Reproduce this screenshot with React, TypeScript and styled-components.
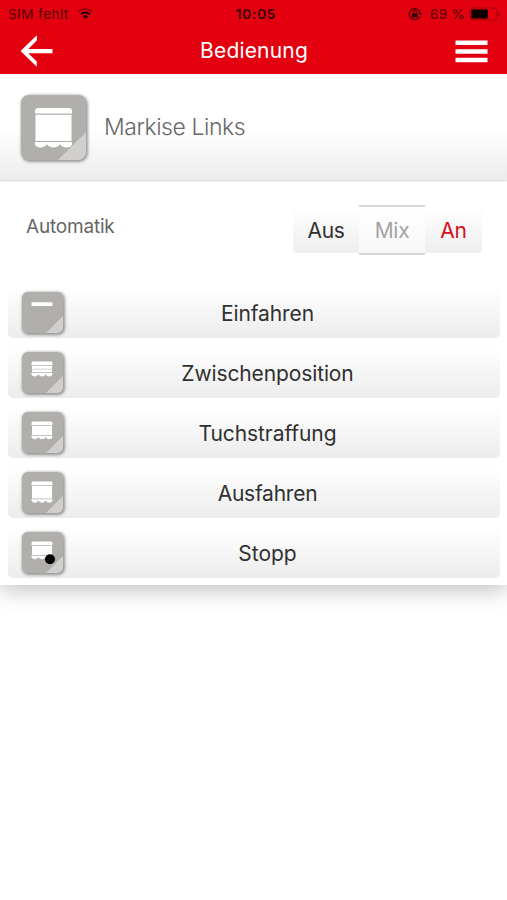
import React from 'react';
import styled, { createGlobalStyle } from 'styled-components';

const GlobalStyle = createGlobalStyle`
  * { box-sizing: border-box; }
  body { margin: 0; background: #fff; font-family: Inter, 'Liberation Sans', sans-serif; overflow: hidden; }
  button { font-family: inherit; border: 0; padding: 0; background: none; }
  svg { display: block; flex: none; }
`;

const Screen = styled.main`
  width: 507px;
  height: 900px;
  background: #fff;
  overflow: hidden;
`;

const Header = styled.header`
  position: relative;
  z-index: 1;
  height: 74px;
  background: #e3000f;
`;

const StatusBar = styled.div`
  height: 27px;
  padding: 1px 7px 0 8px;
  display: grid;
  grid-template-columns: 1fr auto 1fr;
  align-items: center;
  color: #4e0308;
  font-size: 13px;
  line-height: 26px;
`;

const StatusGroup = styled.div<{ $end?: boolean }>`
  display: flex;
  align-items: center;
  justify-content: ${(p) => (p.$end ? 'flex-end' : 'flex-start')};
`;

const Carrier = styled.span`
  width: 70px;
  font-size: 13.5px;
  letter-spacing: 0.45px;
`;

const Clock = styled.span`
  color: #300205;
  font-size: 13.5px;
  font-weight: 600;
  letter-spacing: 0.8px;
  margin-left: 4px;
`;

const Battery = styled.span`
  margin: 0 4px 0 7px;
  font-size: 13.5px;
  letter-spacing: 0.3px;
  white-space: nowrap;
`;

const NavBar = styled.nav`
  height: 47px;
  padding: 0 19px 0 20px;
  display: grid;
  grid-template-columns: 33px 1fr 33px;
  align-items: center;
`;

const NavTitle = styled.h1`
  margin: 0;
  color: #fff;
  text-align: center;
  font-size: 21px;
  font-weight: 400;
  line-height: 46px;
  letter-spacing: 0.18px;
`;

const Panel = styled.section`
  height: 511px;
  background: #fff;
  box-shadow: 0 4px 22px rgba(0, 0, 0, 0.27);
`;

const DeviceHeader = styled.div`
  height: 106px;
  padding: 21px 0 0 21px;
  display: flex;
  background: linear-gradient(#fff 52%, #ececec);
  box-shadow: 0 1px 2px rgba(0, 0, 0, 0.18);
`;

const DeviceName = styled.h2`
  margin: 0 0 0 18px;
  color: #686868;
  font-size: 23px;
  font-weight: 300;
  line-height: 64px;
  letter-spacing: -0.45px;
`;

const Tile = styled.div<{ $large?: boolean }>`
  flex: none;
  width: ${(p) => (p.$large ? 65 : 41)}px;
  height: ${(p) => (p.$large ? 65 : 41)}px;
  border-radius: ${(p) => (p.$large ? 8 : 6)}px;
  background: #b1afac;
  box-shadow: 1px 1px 3px 1px rgba(0, 0, 0, 0.38);
  overflow: hidden;
`;

const AutomaticRow = styled.div`
  height: 108px;
  padding: 25px 25px 0 26px;
  display: flex;
  justify-content: space-between;
`;

const AutomaticLabel = styled.span`
  color: #666;
  font-size: 19px;
  line-height: 43px;
  letter-spacing: -0.2px;
`;

const Segments = styled.div`
  width: 189px;
  height: 50px;
  display: flex;
`;

const Segment = styled.button<{ $tone: 'dark' | 'red' | 'muted' }>`
  width: ${(p) => ({ dark: 66, muted: 66, red: 57 })[p.$tone]}px;
  height: 50px;
  font-size: 21px;
  letter-spacing: -0.3px;
  color: ${(p) => ({ dark: '#303030', muted: '#a3a3a3', red: '#d80d18' })[p.$tone]};
  border: solid ${(p) => (p.$tone === 'muted' ? '#d6d6d6' : 'transparent')};
  border-width: 2px 0;
  border-radius: ${(p) => ({ dark: '5px 0 0 5px', muted: '0', red: '0 5px 5px 0' })[p.$tone]};
  background: ${(p) => (p.$tone === 'muted' ? 'linear-gradient(#fff, #f8f8f8)' : 'linear-gradient(#fff, #eee)')} padding-box;
`;

const Commands = styled.div`
  padding: 0 7px 0 8px;
  display: flex;
  flex-direction: column;
  gap: 10px;
`;

const Command = styled.button`
  height: 50px;
  padding: 4px 14px 0;
  display: grid;
  grid-template-columns: 41px 1fr 14px;
  align-items: start;
  border-radius: 5px;
  background: linear-gradient(#fff, #ececec);
`;

const CommandLabel = styled.span<{ $tracking: number }>`
  color: #303030;
  font-size: 21px;
  line-height: 43px;
  letter-spacing: ${(p) => p.$tracking}px;
`;

type AwningState = 'closed' | 'middle' | 'tight' | 'open' | 'stop';

function AwningTile({ state, large }: { state: AwningState; large?: boolean }) {
  if (large) {
    return (
      <Tile $large>
        <svg width="65" height="65" viewBox="0 0 65 65">
          <path d="M65 37v28H37z" fill="#d0cfcd" />
          <path d="M14 18.500V16q0-3 3-3h31q3 0 3 3v2.500z" fill="#fff" />
          <path d="M14.500 19.700h36V46h-36z" fill="#fff" />
          <path d="M14 47h37v2.500q-1 3-5.500 3-4 0-6.500-3.200-2.500 3.200-6.500 3.200T26 49.300q-2.500 3.200-6.500 3.200-4.500 0-5.500-3z" fill="#fff" />
        </svg>
      </Tile>
    );
  }
  const hem = { closed: 0, middle: 20.3, tight: 23, open: 26.5, stop: 23 }[state];
  return (
    <Tile>
      <svg width="41" height="41" viewBox="0 0 41 41">
        <path d="M41 24v17H24z" fill="#d0cfcd" />
        {state === 'closed' ? (
          <rect x="9.500" y="10.300" width="21" height="3.700" rx=".8" fill="#fff" />
        ) : (
          <g fill="#fff">
            <path d="M9.500 13V11q0-1.500 1.500-1.500h18q1.500 0 1.500 1.500v2z" />
            <path d={`M10 13.700H30V${hem}H10z`} />
            <path d={`M9.500 ${hem + 0.7}H30.500V${hem + 2.2}q-1 2-3.300 2-2.200 0-3.600-2.200-1.300 2.200-3.600 2.200t-3.600-2.200q-1.300 2.200-3.600 2.200-2.300 0-3.300-2z`} />
            {state === 'middle' && <path d="M9.500 17.200h21" stroke="#c8c6c4" strokeWidth=".8" />}
          </g>
        )}
        {state === 'stop' && <circle cx="28" cy="27.300" r="5" fill="#000" />}
      </svg>
    </Tile>
  );
}

const commands: { label: string; state: AwningState; tracking: number }[] = [
  { label: 'Einfahren', state: 'closed', tracking: -0.1 },
  { label: 'Zwischenposition', state: 'middle', tracking: -0.12 },
  { label: 'Tuchstraffung', state: 'tight', tracking: -0.08 },
  { label: 'Ausfahren', state: 'open', tracking: -0.25 },
  { label: 'Stopp', state: 'stop', tracking: 0 },
];

export default function App() {
  return (
    <>
      <GlobalStyle />
      <Screen>
        <Header>
          <StatusBar>
            <StatusGroup>
              <Carrier>SIM fehlt</Carrier>
              <svg width="15" height="12" viewBox="0 0 15 12" fill="none">
                <path d="M.8 3.500Q7.500-1.500 14.200 3.500" stroke="#8b0208" strokeWidth="1.700" />
                <path d="M3 6.300q4.500-3.600 9 0" stroke="#1c0001" strokeWidth="2" />
                <path d="M4.800 8.200q2.700-2 5.400 0L7.500 11z" fill="#1c0001" />
              </svg>
            </StatusGroup>
            <Clock>10:05</Clock>
            <StatusGroup $end>
              <svg width="15" height="14" viewBox="0 0 15 14" fill="none" stroke="#4e0308">
                <path d="M11.800 9.500A5.500 5.500 0 1 1 12.200 6" strokeWidth="1.300" />
                <path d="m10 6 2.300 2.500L14.500 6z" fill="#4e0308" stroke="none" />
                <rect x="4" y="6.300" width="5.600" height="4" fill="#250002" stroke="none" />
                <path d="M5.200 6.500V5a1.600 1.600 0 0 1 3.200 0v1.500" strokeWidth="1.100" />
              </svg>
              <Battery>69 %</Battery>
              <svg width="31" height="14" viewBox="0 0 31 14">
                <rect x=".7" y="1" width="27" height="12" rx="2.500" fill="none" stroke="#a3020b" />
                <rect x="2.300" y="2.600" width="16.500" height="8.800" rx=".8" fill="#0c0000" />
                <path d="M29.300 5v4q1.500-.6 1.500-2t-1.500-2" fill="#8b0208" />
              </svg>
            </StatusGroup>
          </StatusBar>
          <NavBar>
            <svg width="33" height="34" viewBox="0 0 33 34" fill="#fff">
              <path d="M.5 17 16.800 1.200v5.300L8.300 14.900H32.500v4.300H8.300l8.500 8.300v5.300z" />
            </svg>
            <NavTitle>Bedienung</NavTitle>
            <svg width="33" height="24" viewBox="0 0 33 24" fill="#fff">
              <path d="M.5 1.500h32V6H.5zM.5 10.200h32v4.500H.5zM.5 18.700h32v4.500H.5z" />
            </svg>
          </NavBar>
        </Header>
        <Panel>
          <DeviceHeader>
            <AwningTile state="open" large />
            <DeviceName>Markise Links</DeviceName>
          </DeviceHeader>
          <AutomaticRow>
            <AutomaticLabel>Automatik</AutomaticLabel>
            <Segments>
              <Segment $tone="dark">Aus</Segment>
              <Segment $tone="muted">Mix</Segment>
              <Segment $tone="red">An</Segment>
            </Segments>
          </AutomaticRow>
          <Commands>
            {commands.map((c) => (
              <Command key={c.label}>
                <AwningTile state={c.state} />
                <CommandLabel $tracking={c.tracking}>{c.label}</CommandLabel>
              </Command>
            ))}
          </Commands>
        </Panel>
      </Screen>
    </>
  );
}
